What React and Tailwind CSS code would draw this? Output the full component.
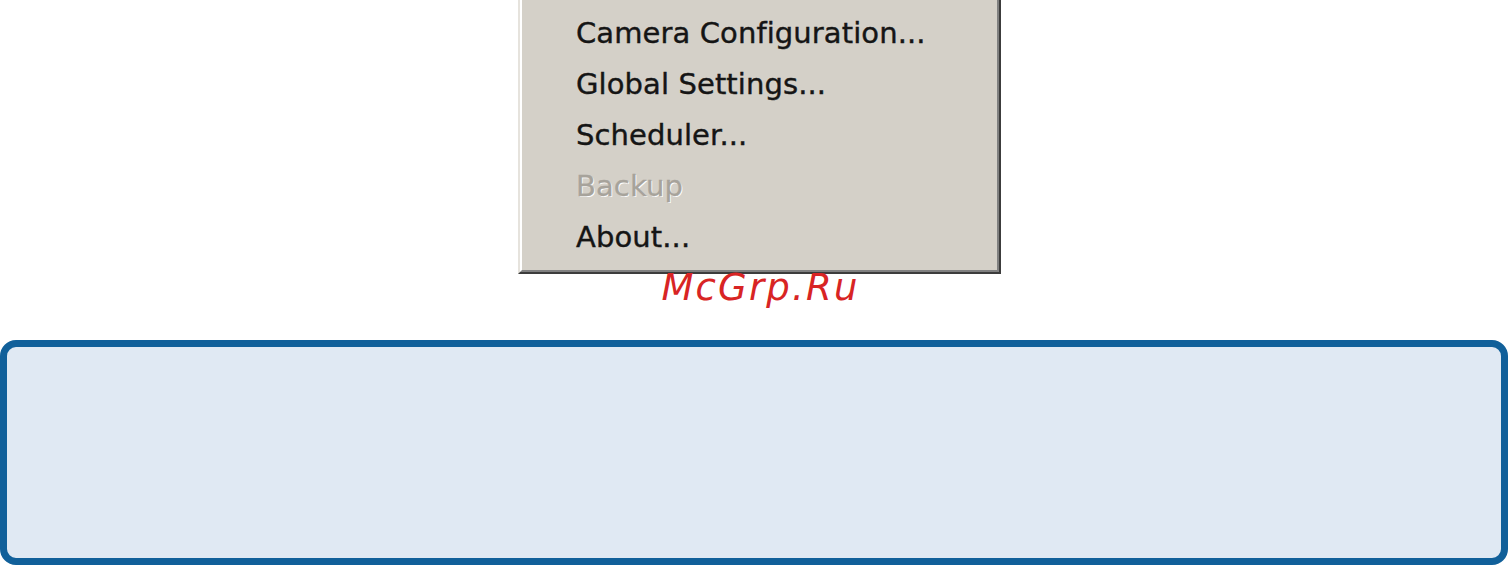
export default function App() {
  const items = [
    { label: "Camera Configuration...", disabled: false },
    { label: "Global Settings...", disabled: false },
    { label: "Scheduler...", disabled: false },
    { label: "Backup", disabled: true },
    { label: "About...", disabled: false },
  ];
  return (
    <div className="w-[1508px] h-[566px] bg-white overflow-hidden flex flex-col">
      <div className="ml-[518px] w-[483px] flex flex-col">
        <div className="h-[274px] border-l-2 border-l-[#e6e3dd] border-r-2 border-r-[#3c3c3c] border-b-2 border-b-[#3c3c3c] bg-[#d4d0c8]">
          <div className="h-full border-l-2 border-l-white border-r-2 border-r-[#808080] border-b-2 border-b-[#808080] pt-[8px] pl-[54px] flex flex-col">
            {items.map((it) => (
              <div
                key={it.label}
                className={
                  it.disabled
                    ? "h-[51px] flex items-center text-[29px] leading-none tracking-[0.1px] text-[#a7a39b] [text-shadow:1px_1px_0_#ffffff] [-webkit-text-stroke:0.3px_#a7a39b] [font-family:'DejaVu_Sans',sans-serif]"
                    : "h-[51px] flex items-center text-[29px] leading-none tracking-[0.1px] text-[#151515] [-webkit-text-stroke:0.4px_#151515] [font-family:'DejaVu_Sans',sans-serif]"
                }
              >
                {it.label}
              </div>
            ))}
          </div>
        </div>
        <div className="h-[66px] flex justify-center">
          <span className="text-[37px] leading-none italic text-[#d82424] tracking-[2.2px] pl-[2px] [font-family:'DejaVu_Sans',sans-serif] -mt-[5px]">
            McGrp.Ru
          </span>
        </div>
      </div>
      <div className="h-[225px] w-[1508px] border-[7px] border-[#11609a] rounded-[16px] bg-[#e0e9f3]" />
    </div>
  );
}
